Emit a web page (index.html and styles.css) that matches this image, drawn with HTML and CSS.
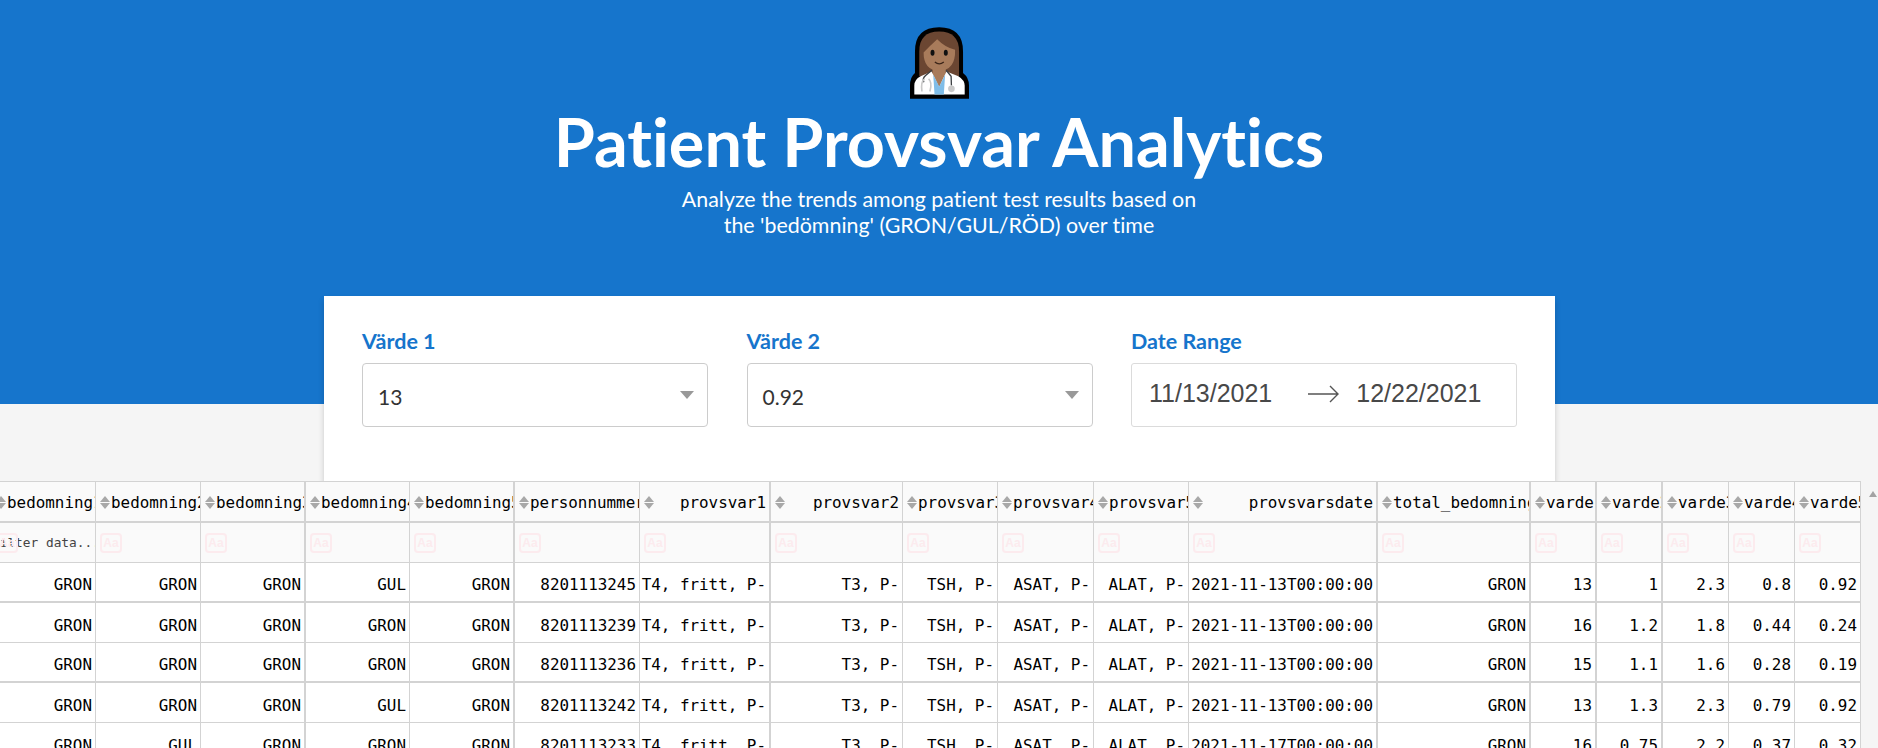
FILE: index.html
```html
<!DOCTYPE html>
<html>

<head>
	<title>Patient Provsvar Analytics</title>
	<meta charset="UTF-8">
	<meta name="viewport" content="width=device-width, initial-scale=1.0">
	<link rel="stylesheet" href="styles.css">
</head>

<body>
	<div class="header">
		<svg class="header-emoji" viewBox="90 52 178 216" xmlns="http://www.w3.org/2000/svg">
			<path fill="#000" d="M90 268V228Q90 202 105 190V125Q105 52 178 52Q250 52 250 125V190Q268 204 268 228V268Z" />
			<path fill="#6b4632" d="M118 200V125Q118 65 178 65Q238 65 238 125V200Z" />
			<path fill="#a87b5b" d="M131 128Q150 108 172 88Q195 112 226 120Q228 182 178 183Q131 182 131 128Z" />
			<path fill="#a87b5b" d="M158 170H198V195L178 232L158 195Z" />
			<ellipse cx="158" cy="129" rx="6" ry="9" fill="#111" />
			<ellipse cx="198" cy="129" rx="6" ry="9" fill="#111" />
			<path fill="none" stroke="#3b2418" stroke-width="4" d="M165 157Q178 168 192 157" />
			<path fill="#fff" d="M103 255V228Q103 210 122 200L155 186L178 232L200 186L236 200Q255 212 255 228V255Z" />
			<path fill="#7fbde8" d="M160 195L178 232L196 195L192 255H164Z" />
			<path fill="none" stroke="#3c4043" stroke-width="4" d="M156 182L137 198Q126 208 132 218M199 182L214 200L215 228" />
			<path fill="none" stroke="#c9c9c9" stroke-width="5" d="M134 208Q122 215 126 246M146 208Q158 218 150 246" />
			<circle cx="215" cy="238" r="10" fill="#c9c9c9" />
		</svg>
		<h1 class="header-title">Patient Provsvar Analytics</h1>
		<p class="header-description">Analyze the trends among patient test results based on<br>the 'bedömning' (GRON/GUL/RÖD) over time</p>
	</div>

	<div class="menu">
		<div class="menu-item">
			<div class="menu-title">Värde 1</div>
			<div class="dropdown">
				<span>13</span>
				<span class="dropdown-arrow"></span>
			</div>
		</div>
		<div class="menu-item">
			<div class="menu-title">Värde 2</div>
			<div class="dropdown">
				<span>0.92</span>
				<span class="dropdown-arrow"></span>
			</div>
		</div>
		<div class="menu-item">
			<div class="menu-title">Date Range</div>
			<div class="date-range">
				<span class="date-value">11/13/2021</span>
				<svg class="date-arrow" viewBox="0 0 32 20" xmlns="http://www.w3.org/2000/svg">
					<path fill="none" stroke="#555" stroke-width="1.4" d="M0 10H30M22 2L30 10L22 18" />
				</svg>
				<span class="date-value">12/22/2021</span>
			</div>
		</div>
	</div>

	<div class="table-wrap">
		<div class="table-box">
			<table class="data-table">
				<colgroup>
					<col class="w104"><col class="w105"><col class="w105"><col class="w104"><col class="w105">
					<col class="w125"><col class="w131"><col class="w132"><col class="w95"><col class="w96"><col class="w95">
					<col class="w189"><col class="w153"><col class="w66"><col class="w66"><col class="w66"><col class="w66"><col class="w66">
				</colgroup>
				<thead>
					<tr class="head-row">
						<th><div class="head-cell"><span class="sort"></span><span class="head-text">bedomning1</span></div></th>
						<th><div class="head-cell"><span class="sort"></span><span class="head-text">bedomning2</span></div></th>
						<th><div class="head-cell"><span class="sort"></span><span class="head-text">bedomning3</span></div></th>
						<th><div class="head-cell"><span class="sort"></span><span class="head-text">bedomning4</span></div></th>
						<th><div class="head-cell"><span class="sort"></span><span class="head-text">bedomning5</span></div></th>
						<th><div class="head-cell"><span class="sort"></span><span class="head-text">personnummer</span></div></th>
						<th><div class="head-cell"><span class="sort"></span><span class="head-text">provsvar1</span></div></th>
						<th><div class="head-cell"><span class="sort"></span><span class="head-text">provsvar2</span></div></th>
						<th><div class="head-cell"><span class="sort"></span><span class="head-text">provsvar3</span></div></th>
						<th><div class="head-cell"><span class="sort"></span><span class="head-text">provsvar4</span></div></th>
						<th><div class="head-cell"><span class="sort"></span><span class="head-text">provsvar5</span></div></th>
						<th><div class="head-cell"><span class="sort"></span><span class="head-text">provsvarsdate</span></div></th>
						<th><div class="head-cell"><span class="sort"></span><span class="head-text">total_bedomning</span></div></th>
						<th><div class="head-cell"><span class="sort"></span><span class="head-text">varde1</span></div></th>
						<th><div class="head-cell"><span class="sort"></span><span class="head-text">varde2</span></div></th>
						<th><div class="head-cell"><span class="sort"></span><span class="head-text">varde3</span></div></th>
						<th><div class="head-cell"><span class="sort"></span><span class="head-text">varde4</span></div></th>
						<th><div class="head-cell"><span class="sort"></span><span class="head-text">varde5</span></div></th>
					</tr>
					<tr class="filter-row">
						<th><span class="case-toggle">Aa</span><span class="filter-text">filter data...</span></th>
						<th><span class="case-toggle">Aa</span></th>
						<th><span class="case-toggle">Aa</span></th>
						<th><span class="case-toggle">Aa</span></th>
						<th><span class="case-toggle">Aa</span></th>
						<th><span class="case-toggle">Aa</span></th>
						<th><span class="case-toggle">Aa</span></th>
						<th><span class="case-toggle">Aa</span></th>
						<th><span class="case-toggle">Aa</span></th>
						<th><span class="case-toggle">Aa</span></th>
						<th><span class="case-toggle">Aa</span></th>
						<th><span class="case-toggle">Aa</span></th>
						<th><span class="case-toggle">Aa</span></th>
						<th><span class="case-toggle">Aa</span></th>
						<th><span class="case-toggle">Aa</span></th>
						<th><span class="case-toggle">Aa</span></th>
						<th><span class="case-toggle">Aa</span></th>
						<th><span class="case-toggle">Aa</span></th>
					</tr>
				</thead>
				<tbody>
					<tr class="thick-row">
						<td>GRON</td><td>GRON</td><td>GRON</td><td>GUL</td><td>GRON</td><td>8201113245</td>
						<td>T4, fritt, P-</td><td>T3, P-</td><td>TSH, P-</td><td>ASAT, P-</td><td>ALAT, P-</td>
						<td>2021-11-13T00:00:00</td><td>GRON</td><td>13</td><td>1</td><td>2.3</td><td>0.8</td><td>0.92</td>
					</tr>
					<tr>
						<td>GRON</td><td>GRON</td><td>GRON</td><td>GRON</td><td>GRON</td><td>8201113239</td>
						<td>T4, fritt, P-</td><td>T3, P-</td><td>TSH, P-</td><td>ASAT, P-</td><td>ALAT, P-</td>
						<td>2021-11-13T00:00:00</td><td>GRON</td><td>16</td><td>1.2</td><td>1.8</td><td>0.44</td><td>0.24</td>
					</tr>
					<tr class="thick-row">
						<td>GRON</td><td>GRON</td><td>GRON</td><td>GRON</td><td>GRON</td><td>8201113236</td>
						<td>T4, fritt, P-</td><td>T3, P-</td><td>TSH, P-</td><td>ASAT, P-</td><td>ALAT, P-</td>
						<td>2021-11-13T00:00:00</td><td>GRON</td><td>15</td><td>1.1</td><td>1.6</td><td>0.28</td><td>0.19</td>
					</tr>
					<tr>
						<td>GRON</td><td>GRON</td><td>GRON</td><td>GUL</td><td>GRON</td><td>8201113242</td>
						<td>T4, fritt, P-</td><td>T3, P-</td><td>TSH, P-</td><td>ASAT, P-</td><td>ALAT, P-</td>
						<td>2021-11-13T00:00:00</td><td>GRON</td><td>13</td><td>1.3</td><td>2.3</td><td>0.79</td><td>0.92</td>
					</tr>
					<tr>
						<td>GRON</td><td>GUL</td><td>GRON</td><td>GRON</td><td>GRON</td><td>8201113233</td>
						<td>T4, fritt, P-</td><td>T3, P-</td><td>TSH, P-</td><td>ASAT, P-</td><td>ALAT, P-</td>
						<td>2021-11-17T00:00:00</td><td>GRON</td><td>16</td><td>0.75</td><td>2.2</td><td>0.37</td><td>0.32</td>
					</tr>
				</tbody>
			</table>
		</div>
		<div class="scroll-up"></div>
	</div>
</body>

</html>
```

FILE: styles.css
```css
html, body {
    height: 100%;
}

body {
    margin: 0px;
    padding: 0px;
    overflow: hidden;
    background-color: #f5f5f5;
    font-family: Lato, sans-serif;
    font-variant-ligatures: none;
}

.header {
    height: 404px;
    box-sizing: border-box;
    padding-top: 27px;
    background-color: #1675cc;
    color: white;
    text-align: center;
}

.header-emoji {
    display: block;
    width: 59px;
    height: 72px;
    margin: 0 auto;
}

.header-title {
    margin: 3px 0 0 0;
    font-size: 66.5px;
    font-weight: 700;
    line-height: 78px;
}

.header-description {
    margin: 6px 0 0 0;
    font-size: 21.4px;
    line-height: 26px;
}

.menu {
    position: relative;
    display: flex;
    gap: 38.5px;
    box-sizing: border-box;
    width: 1231px;
    height: 185px;
    margin: -108px 0 0 324px;
    padding: 31px 38px 0 38px;
    background-color: white;
    box-shadow: 0 4px 6px 0 rgba(0, 0, 0, 0.18);
}

.menu-item {
    width: 346px;
}

.menu-item:last-child {
    width: 386px;
}

.menu-title {
    margin-bottom: 7px;
    color: #1675cc;
    font-size: 21.5px;
    font-weight: 700;
    line-height: 29px;
}

.dropdown {
    display: flex;
    align-items: center;
    justify-content: space-between;
    box-sizing: border-box;
    height: 64px;
    padding: 2px 13px 0 15px;
    border: 1px solid #ccc;
    border-radius: 4px;
    color: #333;
    font-size: 21px;
}

.dropdown-arrow {
    width: 0px;
    height: 0px;
    margin-bottom: 2px;
    border-top: 8px solid #999;
    border-left: 7px solid transparent;
    border-right: 7px solid transparent;
}

.date-range {
    display: flex;
    align-items: center;
    box-sizing: border-box;
    height: 64px;
    padding: 0 0 4px 17px;
    border: 1px solid #dbdbdb;
    border-radius: 3px;
    color: #484848;
    font-family: "Liberation Sans", sans-serif;
    font-size: 25px;
}

.date-arrow {
    width: 32px;
    height: 20px;
    margin: 2px 16px 0 36px;
}

.table-wrap {
    position: relative;
    display: flex;
}

.table-box {
    flex: none;
    width: 1861px;
    overflow: hidden;
}

.scroll-up {
    flex: none;
    width: 0px;
    height: 0px;
    margin: 10px 0 0 8px;
    border-left: 4.5px solid transparent;
    border-right: 4.5px solid transparent;
    border-bottom: 6px solid #a3a3a3;
}

.data-table {
    width: 1869px;
    margin-left: -8px;
    table-layout: fixed;
    border-collapse: separate;
    border-spacing: 0;
    background-color: white;
    color: black;
    font-family: "DejaVu Sans Mono", monospace;
    font-size: 15.9px;
    border-top: 1px solid #d3d3d3;
}

.w66 { width: 66px; }
.w95 { width: 95px; }
.w96 { width: 96px; }
.w104 { width: 104px; }
.w105 { width: 105px; }
.w125 { width: 125px; }
.w131 { width: 131px; }
.w132 { width: 132px; }
.w153 { width: 153px; }
.w189 { width: 189px; }

th, td {
    box-sizing: border-box;
    padding: 5px 3px 0 0;
    overflow: hidden;
    white-space: nowrap;
    text-align: right;
    font-weight: 400;
    border-right: 1px solid #d3d3d3;
    border-bottom: 1px solid #d3d3d3;
}

/* the table lands on fractional pixels in the original, some lines come out thicker */
th:nth-child(3), td:nth-child(3),
th:nth-child(5), td:nth-child(5),
th:nth-child(7), td:nth-child(7),
th:nth-child(12), td:nth-child(12),
th:nth-child(13), td:nth-child(13),
th:nth-child(14), td:nth-child(14),
th:nth-child(15), td:nth-child(15) {
    border-right-width: 2px;
}

.head-row th {
    height: 41px;
    padding: 1px 3px 0 4px;
    background-color: #fafafa;
    border-bottom-width: 2px;
}

.head-cell {
    display: flex;
    align-items: center;
}

.sort {
    flex: none;
    position: relative;
    width: 10px;
    height: 13px;
    margin-right: 1px;
}

.sort::before, .sort::after {
    content: "";
    position: absolute;
    left: 0px;
    width: 0px;
    height: 0px;
    border-left: 5px solid transparent;
    border-right: 5px solid transparent;
}

.sort::before {
    top: 0px;
    border-bottom: 6px solid #a8a8a8;
}

.sort::after {
    bottom: 0px;
    border-top: 6px solid #a8a8a8;
}

.head-text {
    flex: 1;
    min-width: 0px;
}

.filter-row th {
    position: relative;
    height: 40px;
    padding-top: 0px;
    background-color: #fafafa;
    font-size: 12.8px;
}

.filter-text {
    color: #444;
}

.case-toggle {
    position: absolute;
    top: 10px;
    left: 4px;
    box-sizing: border-box;
    width: 22px;
    height: 20px;
    border: 2px solid #fcebee;
    border-radius: 4px;
    color: #fcebee;
    font-family: "Liberation Sans", sans-serif;
    font-size: 12px;
    font-weight: 700;
    line-height: 16px;
    text-align: center;
}

tbody tr {
    height: 40px;
}

tbody tr.thick-row td {
    border-bottom-width: 2px;
}
```
